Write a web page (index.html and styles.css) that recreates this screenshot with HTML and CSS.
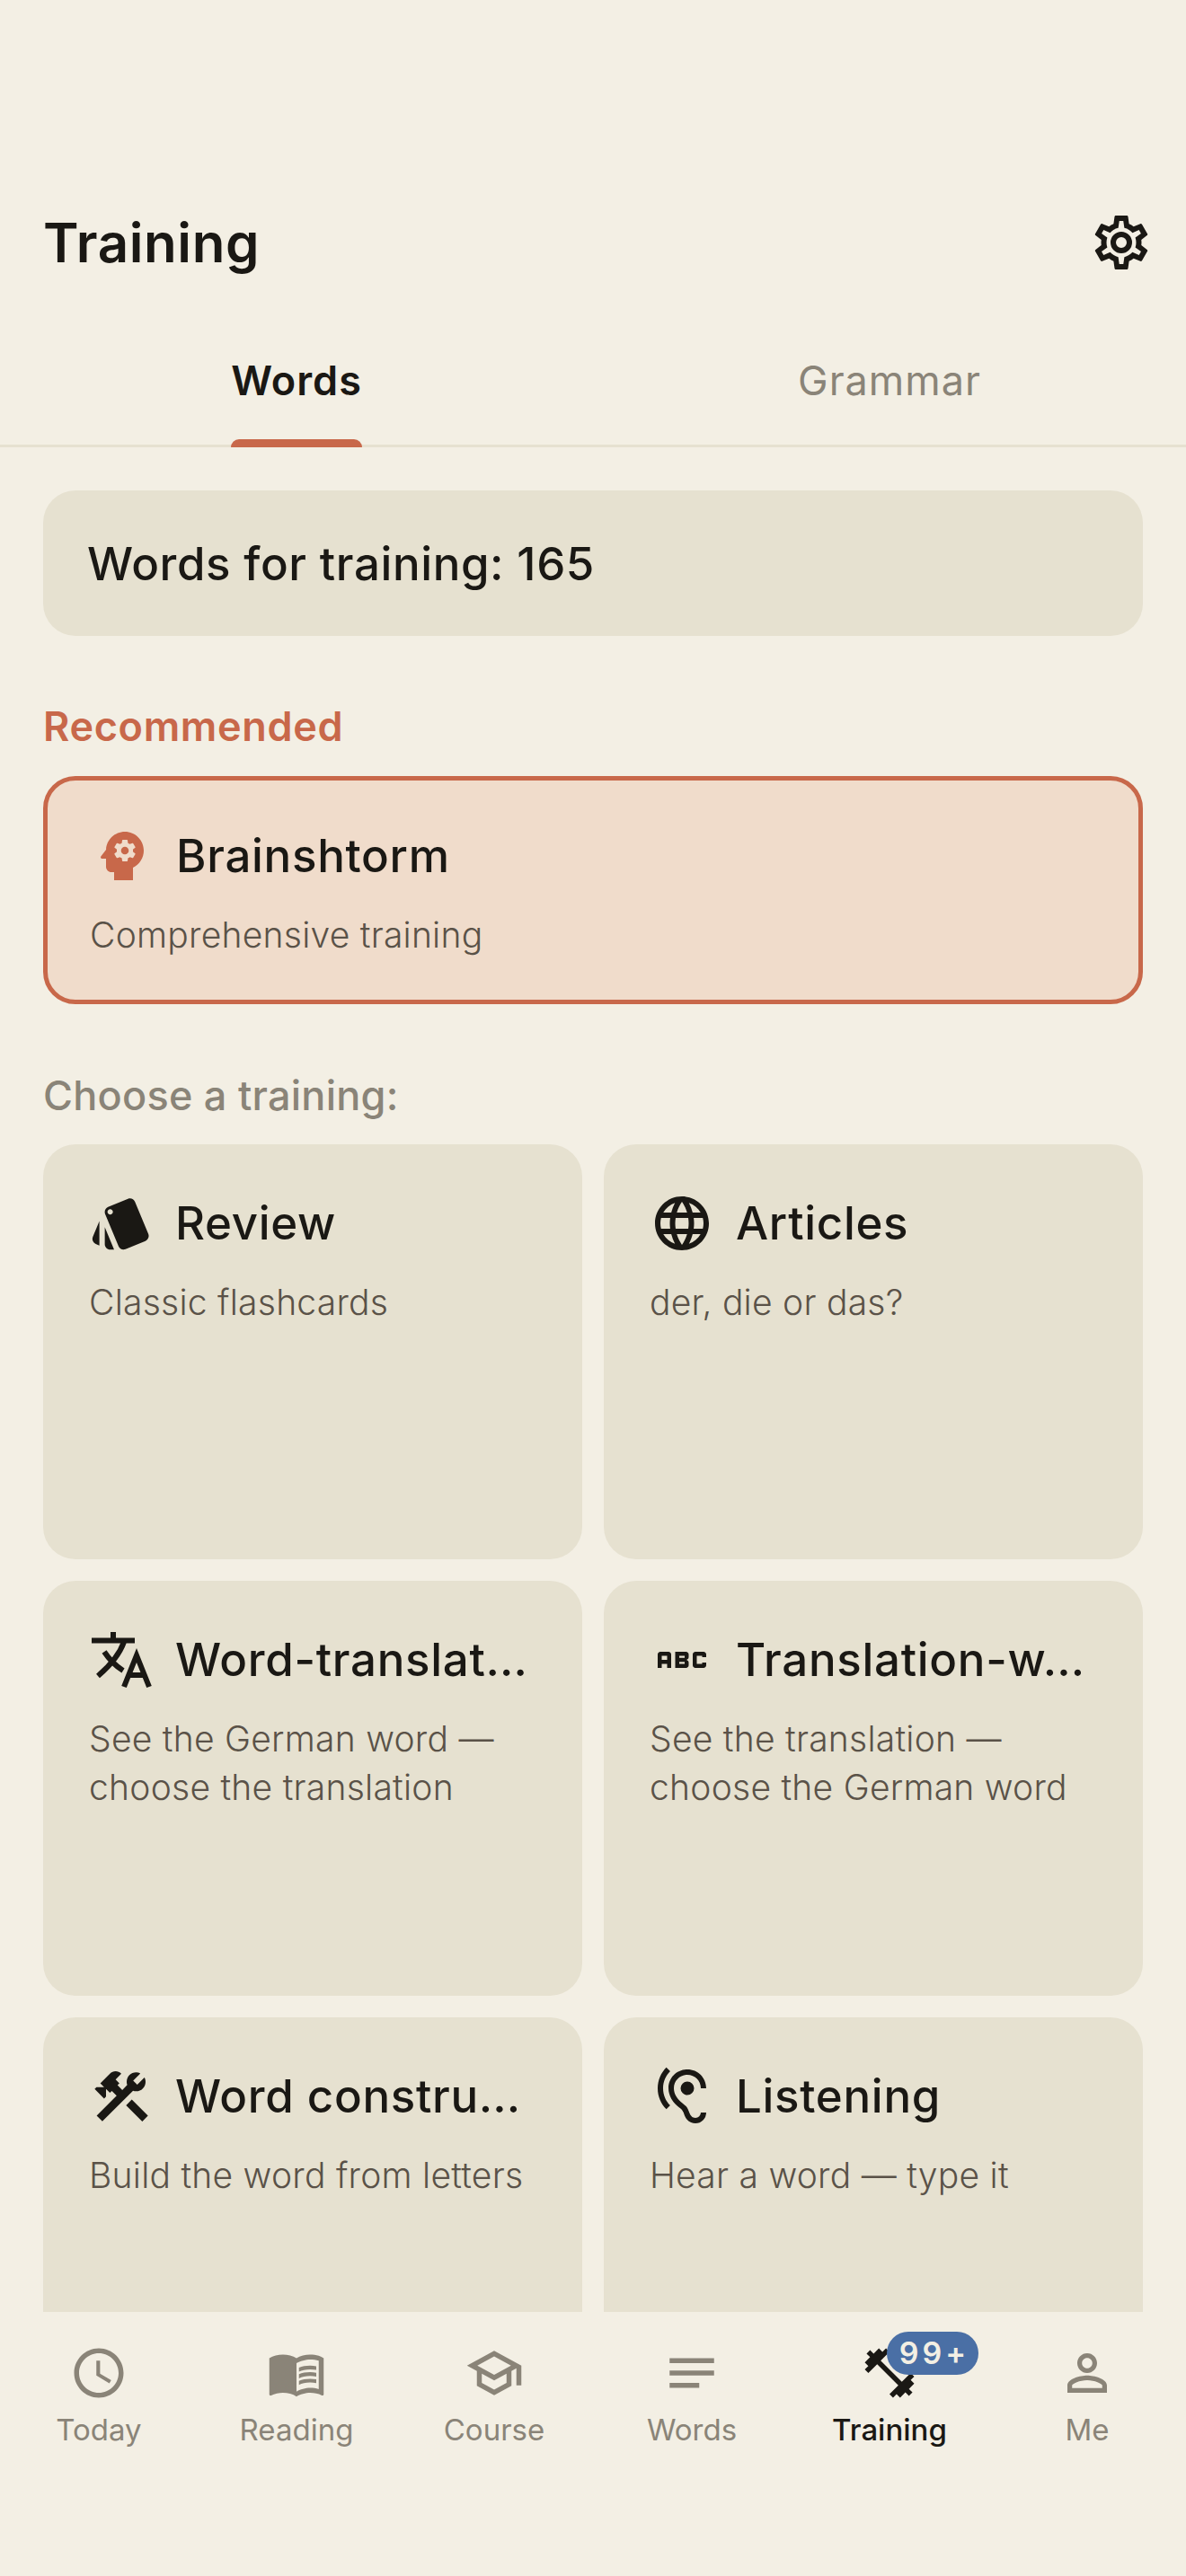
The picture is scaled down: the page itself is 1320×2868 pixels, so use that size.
FILE: index.html
```html
<!DOCTYPE html>
<html lang="en">
<head>
  <meta charset="UTF-8">
  <title>Training</title>
  <link rel="stylesheet" href="styles.css">
</head>
<body>
<div class="screen">

  <header class="header">
    <h1>Training</h1>
    <svg class="icon" viewBox="0 0 24 24"><path d="M12,8A4,4 0 0,1 16,12A4,4 0 0,1 12,16A4,4 0 0,1 8,12A4,4 0 0,1 12,8M12,10A2,2 0 0,0 10,12A2,2 0 0,0 12,14A2,2 0 0,0 14,12A2,2 0 0,0 12,10M10,22C9.75,22 9.54,21.82 9.5,21.58L9.13,18.93C8.5,18.68 7.96,18.34 7.44,17.94L4.95,18.95C4.73,19.03 4.46,18.95 4.34,18.73L2.34,15.27C2.21,15.05 2.27,14.78 2.46,14.63L4.57,12.97L4.5,12L4.57,11L2.46,9.37C2.27,9.22 2.21,8.95 2.34,8.73L4.34,5.27C4.46,5.05 4.73,4.96 4.95,5.05L7.44,6.05C7.96,5.66 8.5,5.32 9.13,5.07L9.5,2.42C9.54,2.18 9.75,2 10,2H14C14.25,2 14.46,2.18 14.5,2.42L14.87,5.07C15.5,5.32 16.04,5.66 16.56,6.05L19.05,5.05C19.27,4.96 19.54,5.05 19.66,5.27L21.66,8.73C21.79,8.95 21.73,9.22 21.54,9.37L19.43,11L19.5,12L19.43,13L21.54,14.63C21.73,14.78 21.79,15.05 21.66,15.27L19.66,18.73C19.54,18.95 19.27,19.04 19.05,18.95L16.56,17.95C16.04,18.34 15.5,18.68 14.87,18.93L14.5,21.58C14.46,21.82 14.25,22 14,22H10M11.25,4L10.88,6.61C9.68,6.86 8.62,7.5 7.85,8.39L5.44,7.35L4.69,8.65L6.8,10.2C6.4,11.37 6.4,12.64 6.8,13.8L4.68,15.36L5.43,16.66L7.86,15.62C8.63,16.5 9.68,17.14 10.87,17.38L11.24,20H12.76L13.13,17.39C14.32,17.14 15.37,16.5 16.14,15.62L18.57,16.66L19.32,15.36L17.2,13.81C17.6,12.64 17.6,11.37 17.2,10.2L19.31,8.65L18.56,7.35L16.15,8.39C15.38,7.5 14.32,6.86 13.12,6.62L12.75,4H11.25Z"/></svg>
  </header>

  <div class="tabs">
    <div class="tab active">Words</div>
    <div class="tab">Grammar</div>
  </div>

  <main class="content">
    <div class="stat">Words for training: 165</div>

    <div class="label accent">Recommended</div>
    <div class="card rec">
      <div class="card-head">
        <svg class="icon" viewBox="0 0 24 24"><path fill-rule="evenodd" d="M13 3C9.25 3 6.2 5.94 6.02 9.64L4.1 12.2c-.25.33-.01.8.4.8H6v3c0 1.1.9 2 2 2h1v3h7v-4.68c2.36-1.12 4-3.53 4-6.32 0-3.87-3.13-7-7-7zm3 7c0 .13-.01.26-.02.39l.83.66c.08.06.1.16.05.25l-.8 1.39c-.05.09-.16.12-.24.09l-.99-.4c-.21.16-.43.29-.67.39L14 13.83c-.01.1-.1.17-.2.17h-1.6c-.1 0-.18-.07-.2-.17l-.15-1.06c-.25-.1-.47-.23-.68-.39l-.99.4c-.09.03-.2 0-.25-.09l-.8-1.39c-.05-.08-.03-.19.05-.25l.84-.66c-.01-.13-.02-.26-.02-.39s.02-.27.04-.39l-.85-.66c-.08-.06-.1-.16-.05-.26l.8-1.38c.05-.09.15-.12.24-.09l1 .4c.2-.15.43-.29.67-.39L12 6.17c.02-.1.1-.17.2-.17h1.6c.1 0 .18.07.2.17l.15 1.06c.24.1.46.23.67.39l1-.4c.09-.03.2 0 .24.09l.8 1.38c.05.09.03.2-.05.26l-.85.66c.03.12.04.25.04.39z"/><circle cx="13" cy="10" r="1.43"/></svg>
        <div class="card-title">Brainshtorm</div>
      </div>
      <div class="card-sub">Comprehensive training</div>
    </div>

    <div class="label muted">Choose a training:</div>
    <div class="grid">
      <div class="card">
        <div class="card-head">
          <svg class="icon" viewBox="0 0 24 24"><path d="M2.53 19.65l1.34.56v-9.03l-2.43 5.86c-.41 1.02.08 2.19 1.09 2.61zm19.5-3.7L17.07 3.98c-.31-.75-1.04-1.21-1.81-1.23-.26 0-.53.04-.79.15L7.1 5.95c-.75.31-1.21 1.03-1.23 1.8-.01.27.04.54.15.8l4.96 11.97c.31.76 1.05 1.22 1.83 1.23.26 0 .52-.05.77-.15l7.36-3.05c1.02-.42 1.51-1.59 1.09-2.6zM7.88 8.75c-.55 0-1-.45-1-1s.45-1 1-1 1 .45 1 1-.45 1-1 1zm-2 11c0 1.1.9 2 2 2h1.45l-3.45-8.34v6.34z"/></svg>
          <div class="card-title">Review</div>
        </div>
        <div class="card-sub">Classic flashcards</div>
      </div>
      <div class="card">
        <div class="card-head">
          <svg class="icon" viewBox="0 0 24 24"><path d="M11.99 2C6.47 2 2 6.48 2 12s4.47 10 9.99 10C17.52 22 22 17.52 22 12S17.52 2 11.99 2zm6.93 6h-2.95c-.32-1.25-.78-2.45-1.38-3.56 1.84.63 3.37 1.91 4.33 3.56zM12 4.04c.83 1.2 1.48 2.53 1.91 3.96h-3.82c.43-1.43 1.08-2.76 1.91-3.96zM4.26 14C4.1 13.36 4 12.69 4 12s.1-1.36.26-2h3.38c-.08.66-.14 1.32-.14 2 0 .68.06 1.34.14 2H4.26zm.82 2h2.95c.32 1.25.78 2.45 1.38 3.56-1.84-.63-3.37-1.9-4.33-3.56zm2.95-8H5.08c.96-1.66 2.49-2.93 4.33-3.56C8.81 5.55 8.35 6.75 8.03 8zM12 19.96c-.83-1.2-1.48-2.53-1.91-3.96h3.82c-.43 1.43-1.08 2.76-1.91 3.96zM14.34 14H9.66c-.09-.66-.16-1.32-.16-2 0-.68.07-1.35.16-2h4.68c.09.65.16 1.32.16 2 0 .68-.07 1.34-.16 2zm.25 5.56c.6-1.11 1.06-2.31 1.38-3.56h2.95c-.96 1.65-2.49 2.93-4.33 3.56zM16.36 14c.08-.66.14-1.32.14-2 0-.68-.06-1.34-.14-2h3.38c.16.64.26 1.31.26 2s-.1 1.36-.26 2h-3.38z"/></svg>
          <div class="card-title">Articles</div>
        </div>
        <div class="card-sub">der, die or das?</div>
      </div>
      <div class="card">
        <div class="card-head">
          <svg class="icon icon-line" viewBox="0 0 72 72"><path d="M3 14.5H51M27 5V14M10 54C24 42 34 30 39 16M17 27C23 36 30 43 38 48M39 66L53 31L67 66M44 53H62"/></svg>
          <div class="card-title">Word-translat…</div>
        </div>
        <div class="card-sub">See the German word —<br>choose the translation</div>
      </div>
      <div class="card">
        <div class="card-head">
          <svg class="icon" viewBox="0 0 24 24"><path d="M21 11h-1.5v-.5h-2v3h2V13H21v1c0 .55-.45 1-1 1h-3c-.55 0-1-.45-1-1v-4c0-.55.45-1 1-1h3c.55 0 1 .45 1 1v1zM8 10v5H6.5v-1.5h-2V15H3v-5c0-.55.45-1 1-1h3c.55 0 1 .45 1 1zm-1.5.5h-2V12h2v-1.5zm7 1.5c.55 0 1 .45 1 1v1c0 .55-.45 1-1 1h-4V9h4c.55 0 1 .45 1 1v1c0 .55-.45 1-1 1zM11 10.5v.75h2v-.75h-2zm2 2.25h-2v.75h2v-.75z"/></svg>
          <div class="card-title">Translation-w…</div>
        </div>
        <div class="card-sub">See the translation —<br>choose the German word</div>
      </div>
      <div class="card">
        <div class="card-head">
          <svg class="icon" viewBox="0 0 24 24"><path d="M13.78 15.3L19.78 21.3L21.89 19.14L15.89 13.14L13.78 15.3M17.5 10.1C17.11 10.1 16.69 10.05 16.36 9.91L4.97 21.25L2.86 19.14L10.27 11.74L8.5 9.96L7.78 10.66L6.33 9.25V12.11L5.63 12.81L2.11 9.25L2.81 8.55H5.62L4.22 7.14L7.78 3.58C8.95 2.41 10.83 2.41 12 3.58L9.89 5.74L11.3 7.14L10.59 7.85L12.38 9.63L14.2 7.75C14.06 7.42 14 7 14 6.63C14 4.66 15.56 3.11 17.5 3.11C18.09 3.11 18.61 3.25 19.08 3.53L16.41 6.2L17.91 7.7L20.58 5.03C20.86 5.5 21 6 21 6.63C21 8.55 19.45 10.1 17.5 10.1Z"/></svg>
          <div class="card-title">Word constru…</div>
        </div>
        <div class="card-sub">Build the word from letters</div>
      </div>
      <div class="card">
        <div class="card-head">
          <svg class="icon" viewBox="0 0 24 24"><path d="M17,20C16.71,20 16.44,19.94 16.24,19.85C15.53,19.48 15.03,18.97 14.53,17.47C14,15.91 13.06,15.18 12.14,14.47C11.35,13.86 10.53,13.23 9.82,11.94C9.29,11 9,9.93 9,9C9,6.2 11.2,4 14,4C16.8,4 19,6.2 19,9H21C21,5.07 17.93,2 14,2C10.07,2 7,5.07 7,9C7,10.26 7.38,11.65 8.07,12.9C9,14.55 10.05,15.38 10.92,16.05C11.73,16.67 12.26,17.08 12.63,18.1C13.18,19.91 13.89,20.89 15.37,21.67C15.87,21.89 16.43,22 17,22A4,4 0 0,0 21,18H19A2,2 0 0,1 17,20M7.64,2.64L6.22,1.22C4.23,3.21 3,5.96 3,9C3,12.04 4.23,14.79 6.22,16.78L7.63,15.37C6,13.74 5,11.5 5,9C5,6.5 6,4.26 7.64,2.64M11.5,9A2.5,2.5 0 0,0 14,11.5A2.5,2.5 0 0,0 16.5,9A2.5,2.5 0 0,0 14,6.5A2.5,2.5 0 0,0 11.5,9Z"/></svg>
          <div class="card-title">Listening</div>
        </div>
        <div class="card-sub">Hear a word — type it</div>
      </div>
    </div>
  </main>

  <nav class="nav">
    <div class="nav-item">
      <svg class="nav-icon" viewBox="0 0 24 24"><path d="M11.99 2C6.47 2 2 6.48 2 12s4.47 10 9.99 10C17.52 22 22 17.52 22 12S17.52 2 11.99 2zM12 20c-4.42 0-8-3.58-8-8s3.58-8 8-8 8 3.58 8 8-3.58 8-8 8zm.5-13H11v6l5.25 3.15.75-1.23-4.5-2.67z"/></svg>
      <span>Today</span>
    </div>
    <div class="nav-item">
      <svg class="nav-icon" viewBox="0 0 24 24"><path d="M21 5c-1.11-.35-2.33-.5-3.5-.5-1.95 0-4.05.4-5.5 1.5-1.45-1.1-3.55-1.5-5.5-1.5S2.45 4.9 1 6v14.65c0 .25.25.5.5.5.1 0 .15-.05.25-.05C3.1 20.45 5.05 20 6.5 20c1.95 0 4.05.4 5.5 1.5 1.35-.85 3.8-1.5 5.5-1.5 1.65 0 3.35.3 4.75 1.05.1.05.15.05.25.05.25 0 .5-.25.5-.5V6c-.6-.45-1.25-.75-2-1zm0 13.5c-1.1-.35-2.3-.5-3.5-.5-1.7 0-4.15.65-5.5 1.5V8c1.35-.85 3.8-1.5 5.5-1.5 1.2 0 2.4.15 3.5.5v11.5z"/><path d="M17.5 10.5c.88 0 1.73.09 2.5.26V9.24c-.79-.15-1.64-.24-2.5-.24-1.7 0-3.24.29-4.5.83v1.66c1.13-.64 2.7-.99 4.5-.99zM13 12.49v1.66c1.13-.64 2.7-.99 4.5-.99.88 0 1.73.09 2.5.26V11.9c-.79-.15-1.64-.24-2.5-.24-1.7 0-3.24.3-4.5.83zM17.5 14.33c-1.7 0-3.24.29-4.5.83v1.66c1.13-.64 2.7-.99 4.5-.99.88 0 1.73.09 2.5.26v-1.52c-.79-.16-1.64-.24-2.5-.24z"/></svg>
      <span>Reading</span>
    </div>
    <div class="nav-item">
      <svg class="nav-icon" viewBox="0 0 24 24"><path d="M12 3L1 9l4 2.18v6L12 21l7-3.82v-6l2-1.09V17h2V9L12 3zm6.82 6L12 12.72 5.18 9 12 5.28 18.82 9zM17 15.99l-5 2.73-5-2.73v-3.72L12 15l5-2.73v3.72z"/></svg>
      <span>Course</span>
    </div>
    <div class="nav-item">
      <svg class="nav-icon" viewBox="0 0 24 24"><path d="M3 18h12v-2H3v2zM3 6v2h18V6H3zm0 7h18v-2H3v2z"/></svg>
      <span>Words</span>
    </div>
    <div class="nav-item active">
      <svg class="nav-icon" viewBox="0 0 24 24"><path d="M20.57 14.86L22 13.43 20.57 12 17 15.57 8.43 7 12 3.43 10.57 2 9.14 3.43 7.71 2 5.57 4.14 4.14 2.71 2.71 4.14l1.43 1.43L2 7.71l1.43 1.43L2 10.57 3.43 12 7 8.43 15.57 17 12 20.57 13.43 22l1.43-1.43L16.29 22l2.14-2.14 1.43 1.43 1.43-1.43-1.43-1.43L22 16.29z"/></svg>
      <span>Training</span>
      <div class="badge">99+</div>
    </div>
    <div class="nav-item">
      <svg class="nav-icon" viewBox="0 0 24 24"><path d="M12 5.9c1.16 0 2.1.94 2.1 2.1s-.94 2.1-2.1 2.1S9.9 9.16 9.9 8s.94-2.1 2.1-2.1m0 9c2.97 0 6.1 1.46 6.1 2.1v1.1H5.9V17c0-.64 3.13-2.1 6.1-2.1M12 4C9.79 4 8 5.79 8 8s1.79 4 4 4 4-1.79 4-4-1.79-4-4-4zm0 9c-2.67 0-8 1.34-8 4v3h16v-3c0-2.66-5.33-4-8-4z"/></svg>
      <span>Me</span>
    </div>
  </nav>

</div>
</body>
</html>
```

FILE: styles.css
```css
* {
  box-sizing: border-box;
}
body {
  margin: 0;
  background: #f3efe4;
  color: #1a1814;
  font-family: Inter, "Noto Sans", sans-serif;
}
.screen {
  height: 2868px;
  display: flex;
  flex-direction: column;
  overflow: hidden;
}
.icon {
  flex: none;
  width: 72px;
  height: 72px;
  fill: currentColor;
}
.icon-line {
  fill: none;
  stroke: currentColor;
  stroke-width: 6;
}

.header {
  display: flex;
  justify-content: space-between;
  align-items: center;
  padding: 228px 36px 0 48px;
}
.header h1 {
  margin: 0;
  font-size: 60px;
  line-height: 84px;
  font-weight: 600;
  letter-spacing: 0.6px;
}

.tabs {
  display: flex;
  border-bottom: 3px solid #e6e1d0;
}
.tab {
  flex: 1;
  position: relative;
  padding: 85px 0 44px;
  text-align: center;
  font-size: 45px;
  line-height: 54px;
  letter-spacing: 1px;
  color: #8a8478;
}
.tab.active {
  font-weight: 600;
  color: #1a1814;
}
.tab.active::after {
  content: "";
  position: absolute;
  left: 257px;
  bottom: -3px;
  width: 146px;
  height: 9px;
  border-radius: 9px 9px 0 0;
  background: #c8684a;
}

.content {
  flex: 1;
  min-height: 0;
  overflow: hidden;
  padding: 48px 48px 0;
}
.stat {
  height: 162px;
  display: flex;
  align-items: center;
  padding: 0 49px;
  border-radius: 36px;
  background: #e6e1d0;
  font-size: 51px;
  font-weight: 500;
  letter-spacing: 0.6px;
}
.label {
  font-size: 45px;
  line-height: 60px;
  margin-top: 71px;
  margin-bottom: 25px;
}
.accent {
  color: #c8684a;
  font-weight: 600;
  letter-spacing: 0.66px;
}
.muted {
  color: #8a8478;
  font-weight: 500;
  letter-spacing: 0.25px;
  margin-top: 72px;
  margin-bottom: 24px;
}

.card {
  min-width: 0;
  border-radius: 36px;
  background: #e6e1d0;
  padding: 52px 50px 0 51px;
}
.card.rec {
  height: 254px;
  padding: 48px 48px 0 47px;
  border: 5px solid #c8684a;
  background: #f0dccb;
}
.rec .icon {
  color: #c8684a;
}
.card-head {
  display: flex;
  align-items: center;
  gap: 24px;
}
.card-title {
  flex: 1;
  min-width: 0;
  font-size: 51px;
  line-height: 72px;
  font-weight: 500;
  letter-spacing: 0.7px;
  white-space: nowrap;
}
.card-sub {
  margin-top: 25px;
  font-size: 39px;
  line-height: 54px;
  font-weight: 350;
  letter-spacing: 0.25px;
  color: #5a5248;
}
.grid {
  display: grid;
  grid-template-columns: minmax(0, 1fr) minmax(0, 1fr);
  grid-auto-rows: 462px;
  gap: 24px;
}

.nav {
  height: 294px;
  flex: none;
  display: flex;
  background: #f3efe4;
  padding-top: 35px;
}
.nav-item {
  flex: 1;
  position: relative;
  display: flex;
  flex-direction: column;
  align-items: center;
  gap: 9px;
  font-size: 33px;
  line-height: 42px;
  color: #8a8478;
}
.nav-icon {
  width: 66px;
  height: 66px;
  fill: currentColor;
}
.nav-item.active {
  color: #1a1814;
  font-weight: 500;
}
.badge {
  position: absolute;
  top: -13px;
  left: 107px;
  width: 102px;
  height: 48px;
  padding-left: 4px;
  border-radius: 24px;
  background: #4a6fa5;
  color: #f3efe4;
  text-align: center;
  font-size: 34px;
  line-height: 48px;
  font-weight: 600;
  letter-spacing: 4px;
}
```
